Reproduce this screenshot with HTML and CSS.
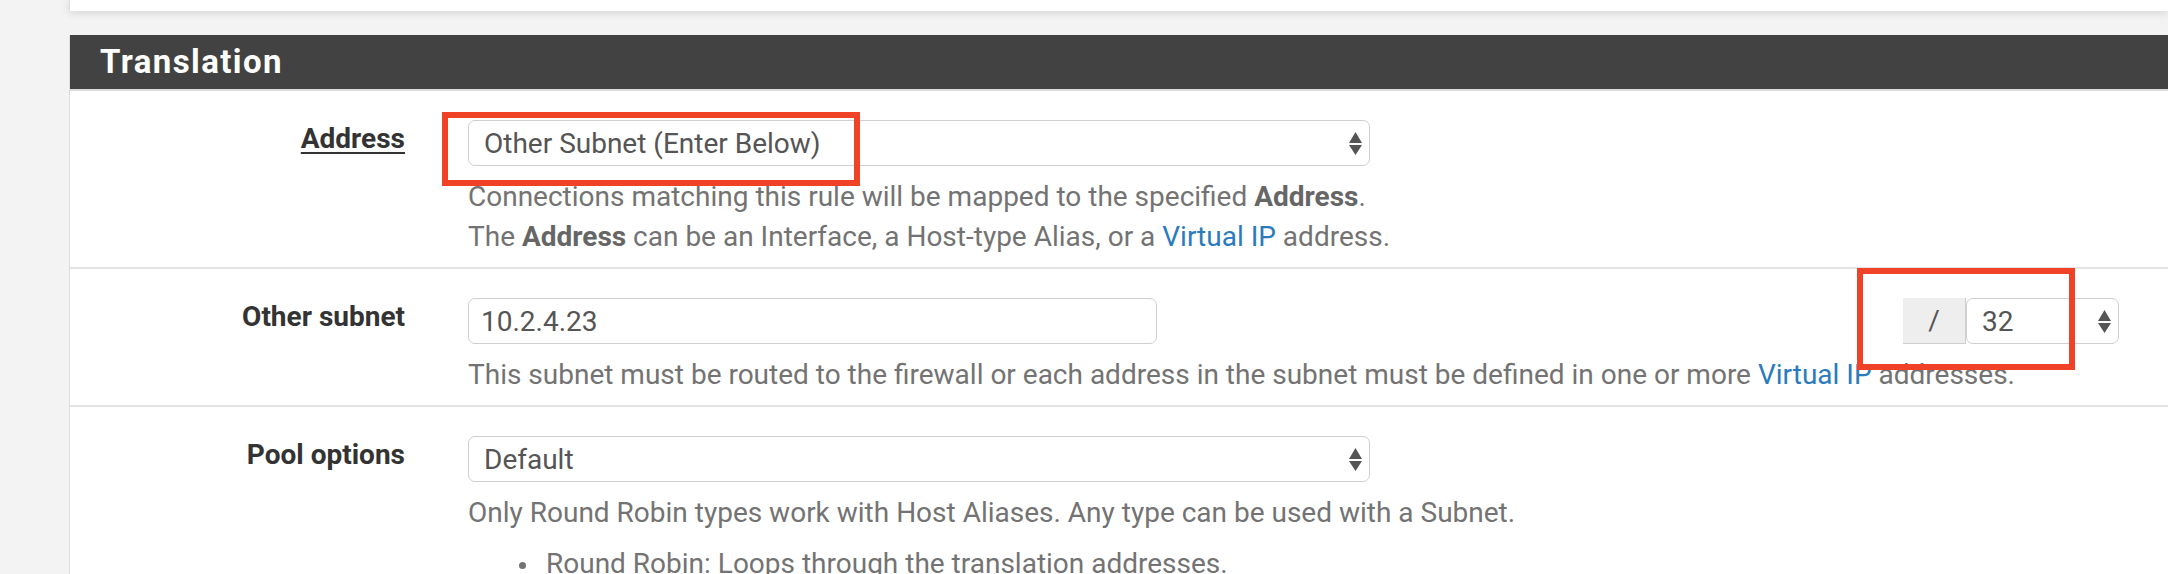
FILE: index.html
```html
<!DOCTYPE html>
<html lang="en">
<head>
<meta charset="utf-8">
<title>Translation</title>
<link rel="stylesheet" href="styles.css">
</head>
<body>
<div class="page">
  <div class="panel panel-top"></div>
  <div class="panel">
    <div class="panel-heading"><h2 class="panel-title">Translation</h2></div>
    <div class="panel-body">
      <div class="form-row">
        <div class="control-label"><span class="underlined">Address</span></div>
        <div class="control">
          <div class="select-wrap wide">
            <select class="form-select"><option>Other Subnet (Enter Below)</option></select>
            <svg class="arrows" viewBox="0 0 13 24" width="13" height="24"><path d="M6.5 0L13 11H0Z M0 13H13L6.5 23Z" fill="#555"/></svg>
          </div>
          <div class="help">Connections matching this rule will be mapped to the specified <b>Address</b>.<br>The <b>Address</b> can be an Interface, a Host-type Alias, or a <a href="#">Virtual IP</a> address.</div>
        </div>
      </div>
      <div class="form-row">
        <div class="control-label">Other subnet</div>
        <div class="control">
          <div class="input-line">
            <input class="form-input" type="text" value="10.2.4.23">
            <div class="input-group">
              <span class="addon">/</span>
              <div class="select-wrap small">
                <select class="form-select"><option>32</option></select>
                <svg class="arrows" viewBox="0 0 13 24" width="13" height="24"><path d="M6.5 0L13 11H0Z M0 13H13L6.5 23Z" fill="#555"/></svg>
              </div>
            </div>
          </div>
          <div class="help">This subnet must be routed to the firewall or each address in the subnet must be defined in one or more <a href="#">Virtual IP</a> addresses.</div>
        </div>
      </div>
      <div class="form-row">
        <div class="control-label">Pool options</div>
        <div class="control">
          <div class="select-wrap wide">
            <select class="form-select"><option>Default</option></select>
            <svg class="arrows" viewBox="0 0 13 24" width="13" height="24"><path d="M6.5 0L13 11H0Z M0 13H13L6.5 23Z" fill="#555"/></svg>
          </div>
          <div class="help">Only Round Robin types work with Host Aliases. Any type can be used with a Subnet.</div>
          <ul class="help-list">
            <li>Round Robin: Loops through the translation addresses.</li>
          </ul>
        </div>
      </div>
    </div>
  </div>
  <div class="highlight hl-1"></div>
  <div class="highlight hl-2"></div>
</div>
</body>
</html>
```
FILE: styles.css
```css
* { box-sizing: border-box; }
html, body { margin: 0; padding: 0; }
body {
  background: #f3f3f3;
  font-family: Roboto, "Liberation Sans", Arial, sans-serif;
  font-size: 28px;
  color: #333;
  overflow: hidden;
}
.page {
  position: relative;
  padding-left: 69px;
  height: 574px;
}
.panel {
  background: #fff;
  border-left: 1px solid #dedede;
}
.panel-top {
  height: 11px;
  margin-bottom: 24px;
  box-shadow: 0 2px 8px rgba(0,0,0,0.12);
}
.panel-heading {
  background: #424242;
  height: 56px;
  border-bottom: 2px solid #dcdcdc;
  padding-left: 30px;
}
.panel-title {
  margin: 0;
  color: #fff;
  font-size: 33px;
  font-weight: 700;
  line-height: 54px;
  letter-spacing: 1.4px;
}
.form-row {
  display: grid;
  grid-template-columns: 335px 1fr;
  column-gap: 63px;
  padding: 29px 49px 10px 0;
  border-top: 2px solid #e4e4e4;
}
.form-row:first-child { border-top: none; }
.control-label {
  text-align: right;
  font-weight: 700;
  line-height: 40px;
  color: #333;
  margin-top: -1px;
}
.underlined {
  text-decoration: underline;
  text-decoration-thickness: 2px;
  text-underline-offset: 4px;
}
.select-wrap {
  position: relative;
  height: 46px;
}
.select-wrap.wide { width: 902px; }
.select-wrap.small { width: 153px; }
.form-select {
  appearance: none;
  -webkit-appearance: none;
  width: 100%;
  height: 46px;
  border: 1px solid #cfcfcf;
  border-radius: 7px;
  background: #fff;
  color: #555;
  font-family: inherit;
  font-size: 28px;
  padding: 0 40px 0 15px;
  outline: none;
}
.arrows {
  position: absolute;
  right: 8px;
  top: 12px;
  pointer-events: none;
}
.input-line {
  display: flex;
  align-items: center;
}
.form-input {
  width: 689px;
  height: 46px;
  border: 1px solid #cfcfcf;
  border-radius: 7px;
  color: #555;
  font-family: inherit;
  font-size: 28px;
  padding: 0 12px;
  outline: none;
}
.input-group {
  margin-left: auto;
  display: flex;
  height: 46px;
}
.addon {
  width: 63px;
  height: 46px;
  background: #eeeeee;
  border-bottom: 1px solid #cfcfcf;
  border-right: 1px solid #cfcfcf;
  color: #555;
  display: flex;
  align-items: center;
  justify-content: center;
  font-size: 28px;
}
.help {
  margin-top: 11px;
  color: #737373;
  line-height: 40px;
}
.help b { font-weight: 700; color: #666; }
.help a { color: #2a7bbd; text-decoration: none; }
.help-list {
  list-style: none;
  margin: 11px 0 0 0;
  padding-left: 51px;
  color: #737373;
  line-height: 40px;
}
.help-list li::before {
  content: "";
  display: inline-block;
  width: 7px;
  height: 7px;
  border-radius: 50%;
  background: #737373;
  margin-right: 20px;
  vertical-align: middle;
}
.highlight {
  position: absolute;
  border: 6px solid #ef4227;
  pointer-events: none;
}
.hl-1 { left: 442px; top: 112px; width: 418px; height: 74px; }
.hl-2 { left: 1857px; top: 268px; width: 218px; height: 102px; }
```
